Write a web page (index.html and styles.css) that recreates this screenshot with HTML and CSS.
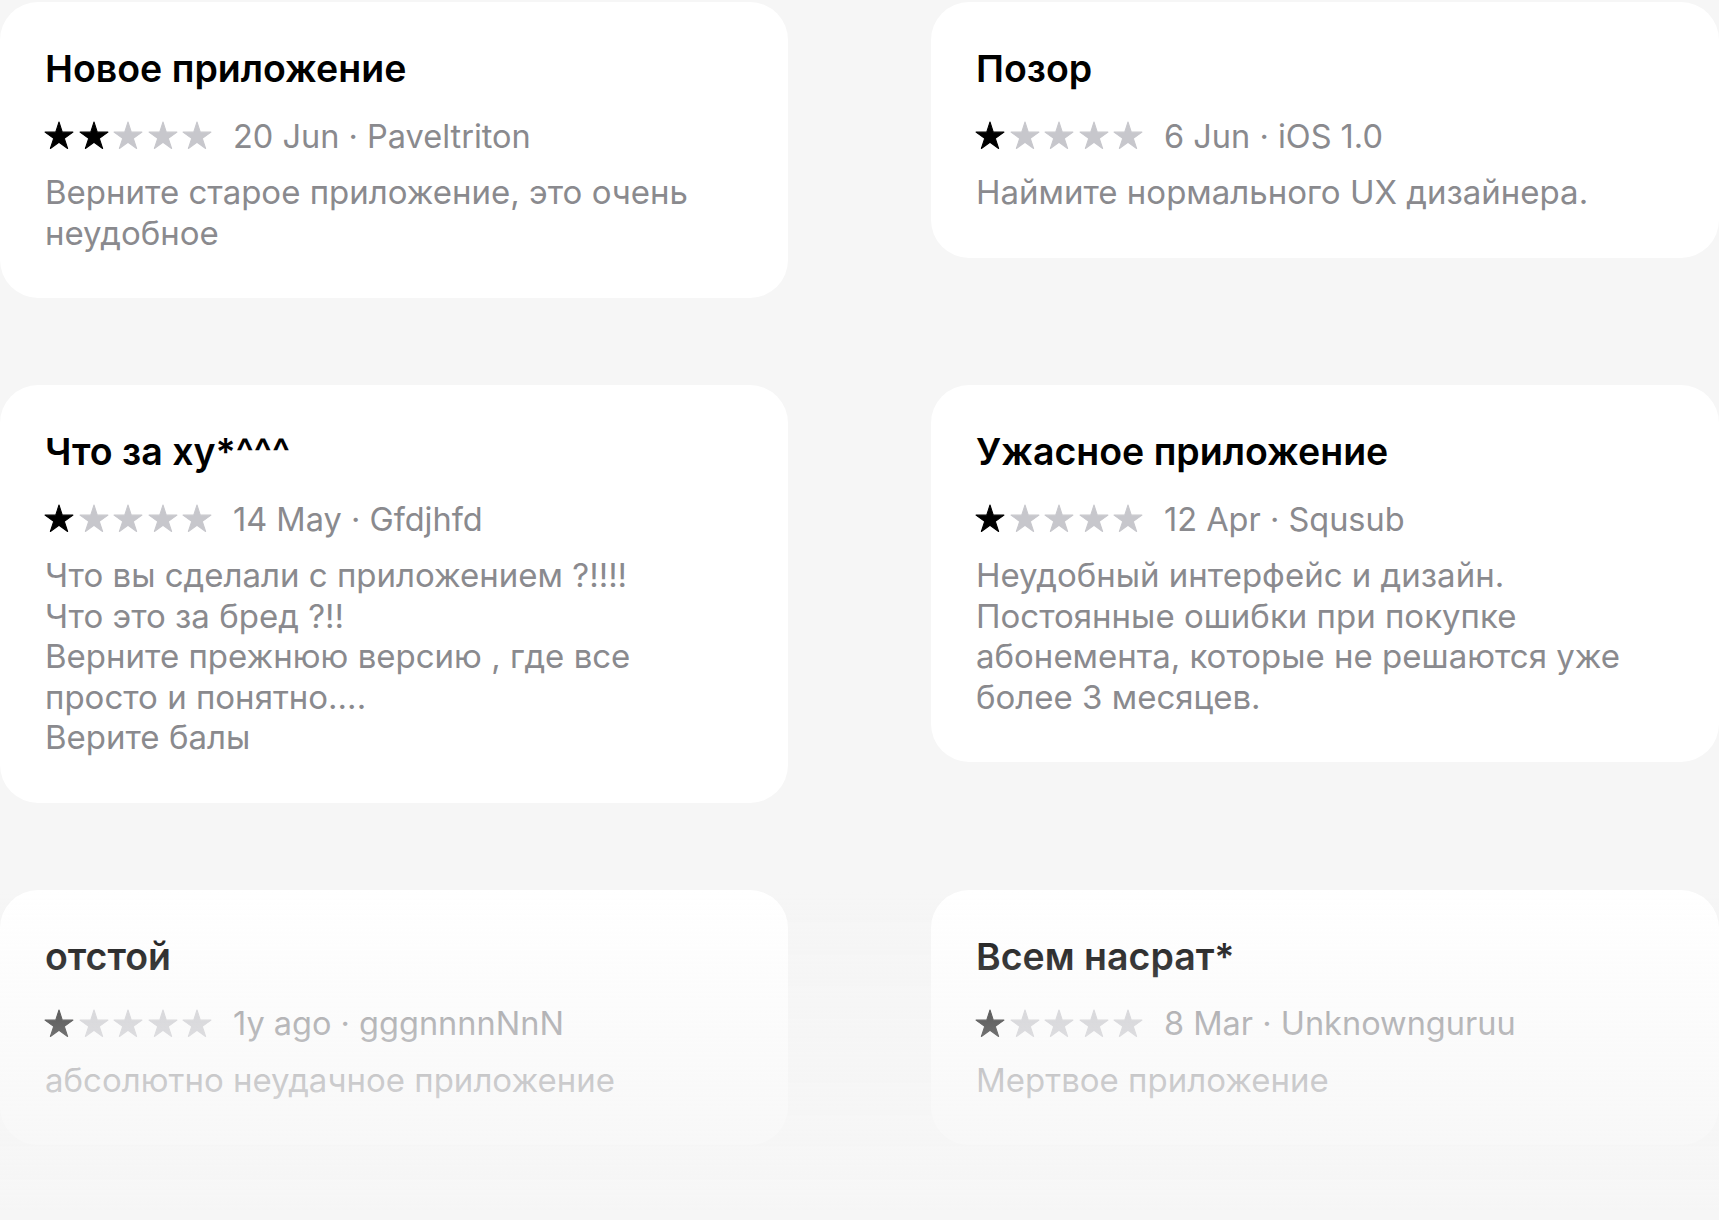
FILE: index.html
```html
<!DOCTYPE html>
<html lang="ru">
<head>
  <meta charset="UTF-8">
  <meta name="viewport" content="width=device-width, initial-scale=1.0">
  <title>Отзывы</title>
  <link rel="stylesheet" href="styles.css">
</head>
<body>
  <svg class="defs" aria-hidden="true">
    <symbol id="star" viewBox="0 0 24 24">
      <path d="M12 1.5L14.47 9.1H22.46L15.99 13.8L18.47 21.4L12 16.7L5.53 21.4L8.01 13.8L1.54 9.1H9.53Z"/>
    </symbol>
  </svg>

  <main class="reviews">
    <article class="review">
      <h3 class="review-title">Новое приложение</h3>
      <div class="review-meta">
        <span class="stars">
          <svg class="on"><use href="#star"/></svg><svg class="on"><use href="#star"/></svg><svg><use href="#star"/></svg><svg><use href="#star"/></svg><svg><use href="#star"/></svg>
        </span>
        <span>20 Jun · Paveltriton</span>
      </div>
      <p class="review-text">Верните старое приложение, это очень неудобное</p>
    </article>

    <article class="review">
      <h3 class="review-title">Позор</h3>
      <div class="review-meta">
        <span class="stars">
          <svg class="on"><use href="#star"/></svg><svg><use href="#star"/></svg><svg><use href="#star"/></svg><svg><use href="#star"/></svg><svg><use href="#star"/></svg>
        </span>
        <span>6 Jun · iOS 1.0</span>
      </div>
      <p class="review-text">Наймите нормального UX дизайнера.</p>
    </article>

    <article class="review">
      <h3 class="review-title">Что за ху*^^^</h3>
      <div class="review-meta">
        <span class="stars">
          <svg class="on"><use href="#star"/></svg><svg><use href="#star"/></svg><svg><use href="#star"/></svg><svg><use href="#star"/></svg><svg><use href="#star"/></svg>
        </span>
        <span>14 May · Gfdjhfd</span>
      </div>
      <p class="review-text">Что вы сделали с приложением ?!!!!
Что это за бред ?!!
Верните прежнюю версию , где все просто и понятно....
Верите балы</p>
    </article>

    <article class="review">
      <h3 class="review-title">Ужасное приложение</h3>
      <div class="review-meta">
        <span class="stars">
          <svg class="on"><use href="#star"/></svg><svg><use href="#star"/></svg><svg><use href="#star"/></svg><svg><use href="#star"/></svg><svg><use href="#star"/></svg>
        </span>
        <span>12 Apr · Squsub</span>
      </div>
      <p class="review-text">Неудобный интерфейс и дизайн.
Постоянные ошибки при покупке абонемента, которые не решаются уже более 3 месяцев.</p>
    </article>

    <article class="review">
      <h3 class="review-title">отстой</h3>
      <div class="review-meta">
        <span class="stars">
          <svg class="on"><use href="#star"/></svg><svg><use href="#star"/></svg><svg><use href="#star"/></svg><svg><use href="#star"/></svg><svg><use href="#star"/></svg>
        </span>
        <span>1y ago · gggnnnnNnN</span>
      </div>
      <p class="review-text">абсолютно неудачное приложение</p>
    </article>

    <article class="review">
      <h3 class="review-title">Всем насрат*</h3>
      <div class="review-meta">
        <span class="stars">
          <svg class="on"><use href="#star"/></svg><svg><use href="#star"/></svg><svg><use href="#star"/></svg><svg><use href="#star"/></svg><svg><use href="#star"/></svg>
        </span>
        <span>8 Mar · Unknownguruu</span>
      </div>
      <p class="review-text">Мертвое приложение</p>
    </article>
  </main>

  <!-- list fades out towards the bottom edge -->
  <div class="fade"></div>
</body>
</html>
```

FILE: styles.css
```css
body {
  margin: 0;
  background: #f6f6f6;
  font-family: Inter, "Noto Sans", sans-serif;
  color: #000;
  overflow: hidden;
}
.defs {
  position: absolute;
  width: 0;
  height: 0;
}
.reviews {
  display: grid;
  grid-template-columns: 1fr 1fr;
  column-gap: 143px;
  row-gap: 87px;
  align-items: start;
  padding-top: 2px;
}
.review {
  background: #fff;
  border-radius: 38px;
  padding: 45px 45px 45px;
}
.review-title {
  margin: 0 0 25px;
  font-size: 37.5px;
  line-height: 44px;
  font-weight: 600;
}
.review-meta {
  display: flex;
  align-items: center;
  gap: 20px;
  height: 40px;
  font-size: 32.5px;
  color: #8a8a8e;
}
.stars {
  display: flex;
  gap: 2.5px;
  margin-left: -2px;
}
.stars svg {
  width: 32px;
  height: 32px;
  fill: #c7c7cc;
  stroke: #c7c7cc;
  stroke-width: 0.8;
  stroke-linejoin: round;
}
.stars svg.on {
  fill: #000;
  stroke: #000;
}
.review-text {
  max-width: 665px;
  margin: 16px 0 0;
  font-size: 33px;
  line-height: 40.5px;
  color: #8a8a8e;
  white-space: pre-line;
}
.fade {
  position: fixed;
  left: 0;
  right: 0;
  bottom: 0;
  height: 330px;
  background: linear-gradient(to bottom, rgba(246, 246, 246, 0), #f6f6f6 97%);
  pointer-events: none;
}
```
